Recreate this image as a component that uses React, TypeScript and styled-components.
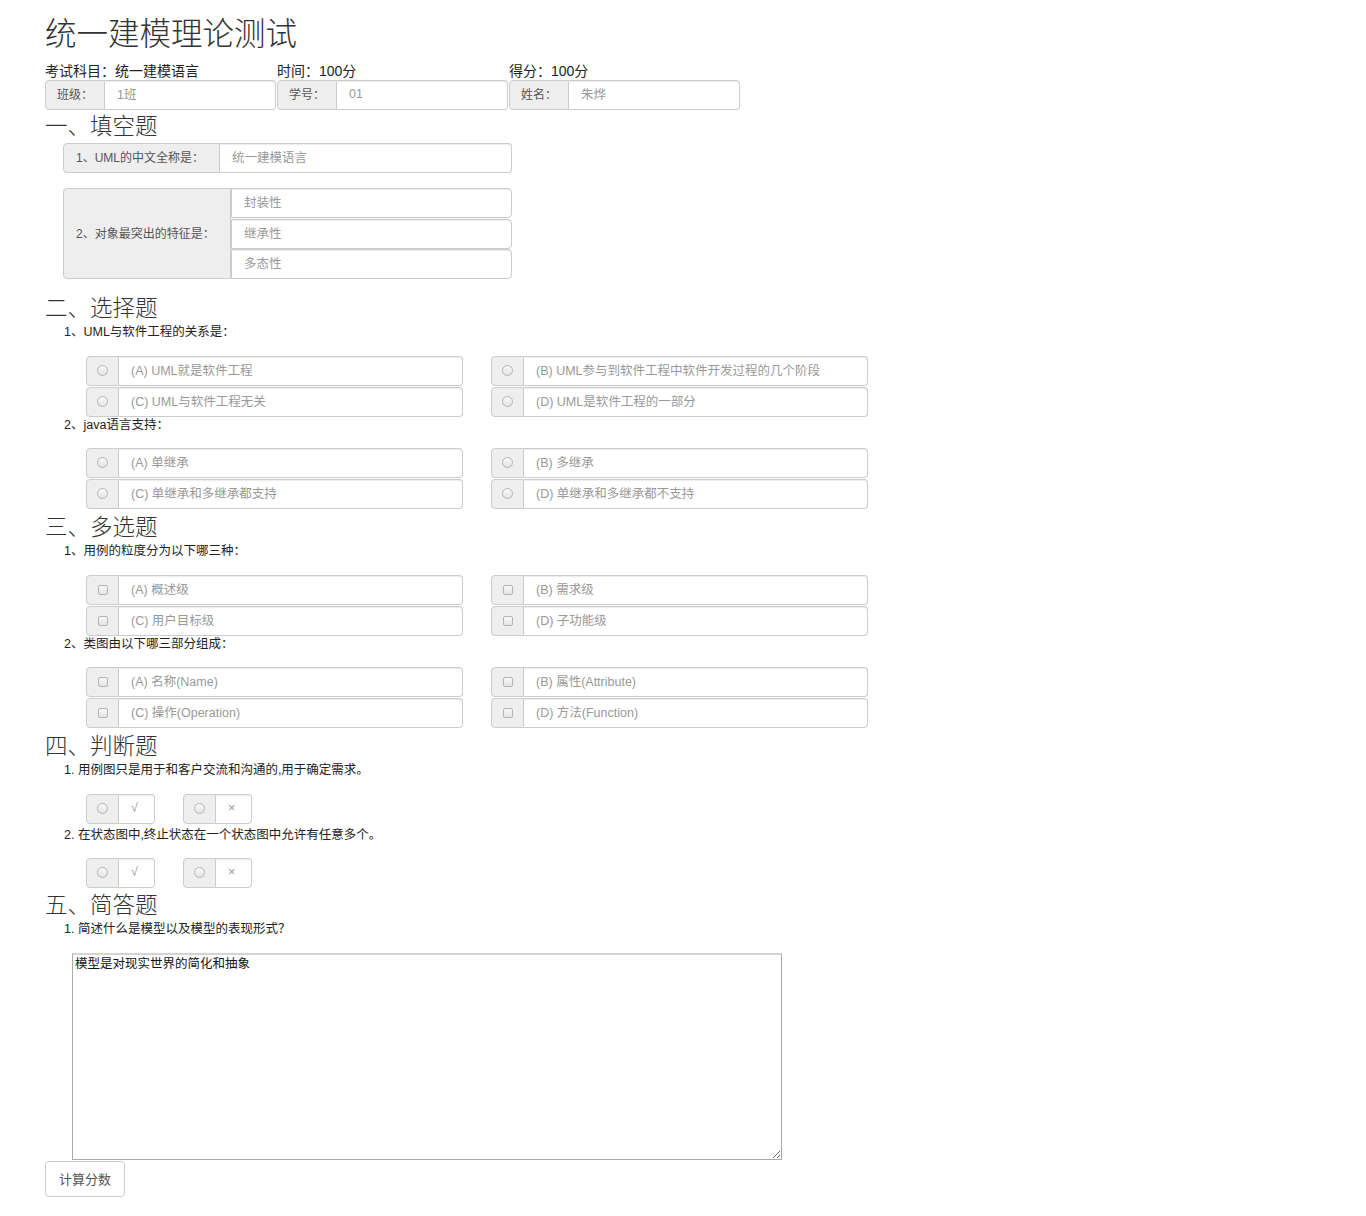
import styled, { createGlobalStyle } from 'styled-components';

const GlobalStyle = createGlobalStyle`
  body {
    margin: 0;
    background: #fff;
    color: #333;
    font-family: "Liberation Sans", "Noto Sans CJK SC", sans-serif;
    font-size: 12.5px;
  }
`;

const StyledPage = styled.div`
  padding: 0 0 20px 45px;
`;

const StyledTitle = styled.h1`
  margin: 17px 0 0;
  font-size: 31.5px;
  line-height: 34px;
  font-weight: 300;
  color: #333;
`;

const StyledInfoGrid = styled.div`
  display: grid;
  grid-template-columns: repeat(3, 232px);
  margin-top: 12px;
`;

const StyledInfoLabel = styled.div`
  font-size: 14px;
  line-height: 16px;
  color: #222;
  margin-bottom: 1px;
`;

const StyledHeading = styled.h2<{ $top?: number }>`
  margin: ${({ $top }) => $top ?? 6}px 0 0;
  font-size: 22.5px;
  line-height: 26px;
  font-weight: 300;
  color: #333;
`;

const StyledQuestion = styled.div<{ $top?: number }>`
  margin: ${({ $top }) => $top ?? 0}px 0 0 19px;
  line-height: 16px;
  color: #222;
`;

interface GroupProps {
  $width?: number;
  $top?: number;
  $left?: number;
}

const StyledGroup = styled.div<GroupProps>`
  display: flex;
  height: 30px;
  width: ${({ $width }) => ($width ? `${$width}px` : '100%')};
  margin-top: ${({ $top }) => $top ?? 0}px;
  margin-left: ${({ $left }) => $left ?? 0}px;
  box-sizing: border-box;
`;

const StyledAddon = styled.div<{ $width: number; $center?: boolean }>`
  flex: 0 0 ${({ $width }) => $width}px;
  min-width: 0;
  display: flex;
  align-items: center;
  justify-content: ${({ $center }) => ($center ? 'center' : 'flex-start')};
  box-sizing: border-box;
  padding: ${({ $center }) => ($center ? '0 0 1px' : '0 11px 3px')};
  background: #eee;
  border: 1px solid #ccc;
  border-radius: 4px 0 0 4px;
  color: #555;
  font-size: 12px;
  white-space: nowrap;
`;

const StyledField = styled.div`
  flex: 1;
  min-width: 0;
  display: flex;
  align-items: center;
  box-sizing: border-box;
  height: 100%;
  padding: 0 12px 3px;
  background: #fff;
  border: 1px solid #ccc;
  border-left: none;
  border-radius: 0 4px 4px 0;
  box-shadow: inset 0 1px 1px rgba(0, 0, 0, 0.075);
  color: #999;
  white-space: nowrap;
`;

const StyledStackGroup = styled.div`
  display: flex;
  width: 449px;
  margin: 15px 0 0 18px;
`;

const StyledStackAddon = styled(StyledAddon)`
  padding: 0 12px 3px;
`;

const StyledStack = styled.div`
  flex: 1;
  display: flex;
  flex-direction: column;
  gap: 0.5px;
`;

const StyledStackField = styled(StyledField)`
  flex: 0 0 30px;
  border-left: 1px solid #ccc;
`;

const StyledOptions = styled.div<{ $top?: number }>`
  display: grid;
  grid-template-columns: 377px 377px;
  column-gap: 28px;
  row-gap: 1px;
  margin: ${({ $top }) => $top ?? 15}px 0 0 41px;
`;

const StyledJudgeRow = styled.div<{ $top?: number }>`
  display: flex;
  gap: 28px;
  margin: ${({ $top }) => $top ?? 15}px 0 0 41px;
`;

const StyledRadio = styled.span`
  display: inline-block;
  width: 11px;
  height: 11px;
  box-sizing: border-box;
  border-radius: 50%;
  border: 1px solid #b4b4b4;
  background: linear-gradient(#f8f8f8, #e4e4e4);
`;

const StyledCheck = styled(StyledRadio)`
  width: 10px;
  height: 10px;
  border-radius: 2px;
`;

const StyledAnswer = styled.textarea`
  display: block;
  width: 710px;
  height: 207px;
  margin: 16px 0 0 27px;
  box-sizing: border-box;
  padding: 1px 2px;
  border: 1px solid #a9a9a9;
  border-top: 2px solid #d4d4d4;
  font-family: "Liberation Sans", "Noto Sans CJK SC", sans-serif;
  font-size: 12.5px;
  line-height: 16px;
  color: #111;
  resize: both;
`;

const StyledButton = styled.button`
  display: block;
  width: 80px;
  height: 36px;
  margin-top: 1px;
  padding-bottom: 3px;
  background: #fff;
  border: 1px solid #ccc;
  border-radius: 4px;
  color: #555;
  font-family: "Liberation Sans", "Noto Sans CJK SC", sans-serif;
  font-size: 13px;
  cursor: pointer;
`;

const info = [
  { label: '考试科目：统一建模语言', addon: '班级：', value: '1班' },
  { label: '时间：100分', addon: '学号：', value: '01' },
  { label: '得分：100分', addon: '姓名：', value: '朱烨' },
];

interface ChoiceQuestion {
  title: string;
  options: string[];
}

const singles: ChoiceQuestion[] = [
  {
    title: '1、UML与软件工程的关系是：',
    options: [
      '(A) UML就是软件工程',
      '(B) UML参与到软件工程中软件开发过程的几个阶段',
      '(C) UML与软件工程无关',
      '(D) UML是软件工程的一部分',
    ],
  },
  {
    title: '2、java语言支持：',
    options: ['(A) 单继承', '(B) 多继承', '(C) 单继承和多继承都支持', '(D) 单继承和多继承都不支持'],
  },
];

const multiples: ChoiceQuestion[] = [
  {
    title: '1、用例的粒度分为以下哪三种：',
    options: ['(A) 概述级', '(B) 需求级', '(C) 用户目标级', '(D) 子功能级'],
  },
  {
    title: '2、类图由以下哪三部分组成：',
    options: ['(A) 名称(Name)', '(B) 属性(Attribute)', '(C) 操作(Operation)', '(D) 方法(Function)'],
  },
];

const judges = ['1. 用例图只是用于和客户交流和沟通的,用于确定需求。', '2. 在状态图中,终止状态在一个状态图中允许有任意多个。'];

const ChoiceList = ({ items, multi }: { items: ChoiceQuestion[]; multi?: boolean }) => (
  <>
    {items.map((q, i) => (
      <div key={q.title}>
        <StyledQuestion $top={i === 0 ? 2 : 0}>{q.title}</StyledQuestion>
        <StyledOptions $top={i === 0 ? 16 : 15}>
          {q.options.map((opt) => (
            <StyledGroup key={opt}>
              <StyledAddon $width={33} $center>
                {multi ? <StyledCheck /> : <StyledRadio />}
              </StyledAddon>
              <StyledField>{opt}</StyledField>
            </StyledGroup>
          ))}
        </StyledOptions>
      </div>
    ))}
  </>
);

export default function App() {
  return (
    <>
      <GlobalStyle />
      <StyledPage>
        <StyledTitle>统一建模理论测试</StyledTitle>

        <StyledInfoGrid>
          {info.map((item) => (
            <div key={item.addon}>
              <StyledInfoLabel>{item.label}</StyledInfoLabel>
              <StyledGroup $width={231}>
                <StyledAddon $width={60}>{item.addon}</StyledAddon>
                <StyledField>{item.value}</StyledField>
              </StyledGroup>
            </div>
          ))}
        </StyledInfoGrid>

        {/* 填空题 */}
        <StyledHeading $top={4}>一、填空题</StyledHeading>
        <StyledGroup $width={449} $top={3} $left={18}>
          <StyledStackAddon $width={157}>1、UML的中文全称是：</StyledStackAddon>
          <StyledField>统一建模语言</StyledField>
        </StyledGroup>
        <StyledStackGroup>
          <StyledStackAddon $width={168}>2、对象最突出的特征是：</StyledStackAddon>
          <StyledStack>
            <StyledStackField>封装性</StyledStackField>
            <StyledStackField>继承性</StyledStackField>
            <StyledStackField>多态性</StyledStackField>
          </StyledStack>
        </StyledStackGroup>

        {/* 选择题 */}
        <StyledHeading $top={17}>二、选择题</StyledHeading>
        <ChoiceList items={singles} />

        {/* 多选题 */}
        <StyledHeading>三、多选题</StyledHeading>
        <ChoiceList items={multiples} multi />

        {/* 判断题 */}
        <StyledHeading>四、判断题</StyledHeading>
        {judges.map((j, i) => (
          <div key={j}>
            <StyledQuestion $top={i === 0 ? 2 : 3}>{j}</StyledQuestion>
            <StyledJudgeRow $top={i === 0 ? 16 : 15}>
              {['√', '×'].map((mark) => (
                <StyledGroup key={mark} $width={69}>
                  <StyledAddon $width={33} $center>
                    <StyledRadio />
                  </StyledAddon>
                  <StyledField>{mark}</StyledField>
                </StyledGroup>
              ))}
            </StyledJudgeRow>
          </div>
        ))}

        {/* 简答题 */}
        <StyledHeading $top={5}>五、简答题</StyledHeading>
        <StyledQuestion $top={2}>1. 简述什么是模型以及模型的表现形式？</StyledQuestion>
        <StyledAnswer defaultValue="模型是对现实世界的简化和抽象" />
        <StyledButton>计算分数</StyledButton>
      </StyledPage>
    </>
  );
}
